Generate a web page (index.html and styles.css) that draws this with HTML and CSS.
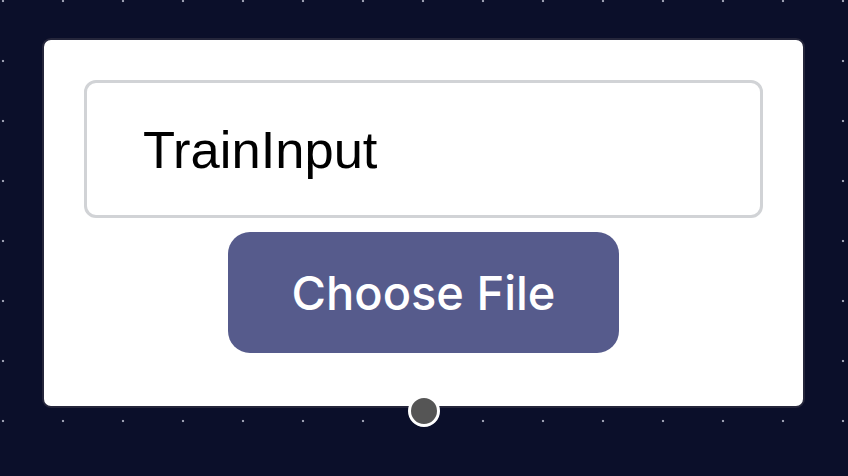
FILE: index.html
```html
<!DOCTYPE html>
<html>
<head>
<meta charset="utf-8">
<link rel="stylesheet" href="styles.css">
</head>
<body>
<div class="canvas">
  <div class="node">
    <div class="name-field">TrainInput</div>
    <div class="actions">
      <button class="choose">Choose File</button>
    </div>
    <span class="handle"></span>
  </div>
</div>
</body>
</html>
```
FILE: styles.css
```css
html, body {
  margin: 0;
  padding: 0;
  width: 848px;
  height: 476px;
  overflow: hidden;
}
body {
  background-color: #0b0f2a;
  background-image: radial-gradient(circle, #9a9db0 1.2px, transparent 1.6px);
  background-size: 60px 60px;
  background-position: -27px -29px;
}
.canvas {
  padding: 38px 0 0 42px;
}
.node {
  position: relative;
  box-sizing: border-box;
  width: 763px;
  height: 370px;
  background: #ffffff;
  border: 2px solid #25263b;
  border-radius: 9px;
  padding: 40px 40px 0 40px;
  display: flex;
  flex-direction: column;
  align-items: stretch;
}
.name-field {
  box-sizing: border-box;
  height: 138px;
  border: 3px solid #d1d3d6;
  border-radius: 12px;
  padding-left: 56px;
  display: flex;
  align-items: center;
  font-family: "Liberation Sans", Arial, sans-serif;
  font-size: 52.5px;
  color: #000;
}
.actions {
  display: flex;
  justify-content: center;
  margin-top: 14px;
}
.choose {
  width: 391px;
  height: 121px;
  border: none;
  border-radius: 22px;
  background: #565b8c;
  color: #ffffff;
  font-family: Inter, "Noto Sans", sans-serif;
  font-size: 47px;
  font-weight: 500;
  padding: 0;
}
.handle {
  position: absolute;
  left: 50%;
  bottom: -21px;
  transform: translateX(-50%);
  box-sizing: border-box;
  width: 32px;
  height: 32px;
  border-radius: 50%;
  background: #555555;
  border: 3px solid #ffffff;
}
```
